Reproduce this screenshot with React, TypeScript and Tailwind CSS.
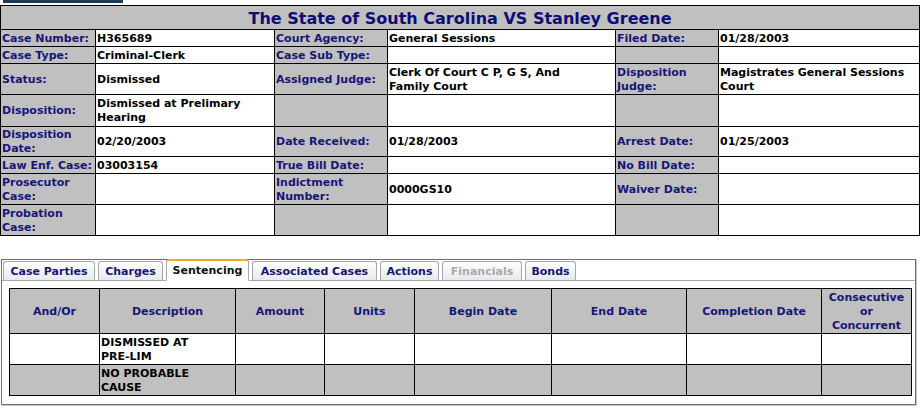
import React from 'react';

type Cell = { label?: React.ReactNode; value?: React.ReactNode };
type Row = { h: string; cells: Cell[] };

const rows: Row[] = [
  { h: 'h-[17px]', cells: [{ label: 'Case Number:', value: 'H365689' }, { label: 'Court Agency:', value: 'General Sessions' }, { label: 'Filed Date:', value: '01/28/2003' }] },
  { h: 'h-[17px]', cells: [{ label: 'Case Type:', value: 'Criminal-Clerk' }, { label: 'Case Sub Type:' }, {}] },
  { h: 'h-[31px]', cells: [{ label: 'Status:', value: 'Dismissed' }, { label: 'Assigned Judge:', value: <>Clerk Of Court C P, G S, And<br />Family Court</> }, { label: <>Disposition<br />Judge:</>, value: <>Magistrates General Sessions<br />Court</> }] },
  { h: 'h-[32px]', cells: [{ label: 'Disposition:', value: <>Dismissed at Prelimary<br />Hearing</> }, {}, {}] },
  { h: 'h-[30px]', cells: [{ label: <>Disposition<br />Date:</>, value: '02/20/2003' }, { label: 'Date Received:', value: '01/28/2003' }, { label: 'Arrest Date:', value: '01/25/2003' }] },
  { h: 'h-[17px]', cells: [{ label: 'Law Enf. Case:', value: '03003154' }, { label: 'True Bill Date:' }, { label: 'No Bill Date:' }] },
  { h: 'h-[31px]', cells: [{ label: <>Prosecutor<br />Case:</> }, { label: <>Indictment<br />Number:</>, value: '0000GS10' }, { label: 'Waiver Date:' }] },
  { h: 'h-[31px]', cells: [{ label: <>Probation<br />Case:</> }, {}, {}] },
];

const tabs = [
  { name: 'Case Parties', w: 'w-[92px]' },
  { name: 'Charges', w: 'w-[65px]' },
  { name: 'Sentencing', w: 'w-[83px]', active: true },
  { name: 'Associated Cases', w: 'w-[125px]' },
  { name: 'Actions', w: 'w-[59px]' },
  { name: 'Financials', w: 'w-[80px]', disabled: true },
  { name: 'Bonds', w: 'w-[51px]' },
];

const sentCols = [
  { name: 'And/Or', w: 'w-[90px]' },
  { name: 'Description', w: 'w-[136px]' },
  { name: 'Amount', w: 'w-[89px]' },
  { name: 'Units', w: 'w-[90px]' },
  { name: 'Begin Date', w: 'w-[137px]' },
  { name: 'End Date', w: 'w-[135px]' },
  { name: 'Completion Date', w: 'w-[135px]' },
  { name: <>Consecutive<br />or<br />Concurrent</>, w: 'w-[90px]' },
];

const sentRows = [
  { desc: <>DISMISSED AT<br />PRE-LIM</>, bg: 'bg-white' },
  { desc: <>NO PROBABLE<br />CAUSE</>, bg: 'bg-[#c0c0c0]' },
];

export default function App() {
  return (
    <div className="w-[924px] h-[413px] bg-white font-['DejaVu_Sans',Verdana,sans-serif] text-[11px] leading-[14px] font-bold overflow-hidden">
      <div className="ml-[3px] w-[120px] h-[3px] bg-[#1d3b56]" />

      {/* Case header */}
      <table className="mt-[2px] w-[919px] table-fixed border-collapse border border-black">
        <colgroup>
          <col className="w-[95px]" />
          <col className="w-[179px]" />
          <col className="w-[113px]" />
          <col className="w-[228px]" />
          <col className="w-[103px]" />
          <col className="w-[201px]" />
        </colgroup>
        <tbody>
          <tr className="h-[24px]">
            <td colSpan={6} className="bg-[#c0c0c0] border border-black text-center text-[16px] leading-[20px] text-[#0d0d75] pt-[2px]">
              The State of South Carolina VS Stanley Greene
            </td>
          </tr>
          {rows.map((row, i) => (
            <tr key={i} className={row.h}>
              {row.cells.map((c, j) => (
                <React.Fragment key={j}>
                  <td className="bg-[#c0c0c0] border border-black px-[1px] pt-[1px] align-middle whitespace-nowrap text-[#161678]">{c.label}</td>
                  <td className="bg-white border border-black px-[1px] pt-[1px] align-middle whitespace-nowrap text-black">{c.value}</td>
                </React.Fragment>
              ))}
            </tr>
          ))}
        </tbody>
      </table>

      {/* Tabs */}
      <div className="mt-[23px] ml-[1px] w-[915px] h-[146px] border border-[#6e6e6e] shadow-[1px_1px_0_#c8c8c8]">
        <div className="flex items-end gap-[3px] pl-[1px] h-[21px] border-b border-[#a8a8a8]">
          {tabs.map((t) =>
            t.active ? (
              <div key={t.name} className={`${t.w} h-[22px] -mb-[1px] pt-[1px] bg-white border border-[#a8a8a8] border-b-white border-t-2 border-t-[#f2a93b] rounded-t-[3px] flex items-center justify-center text-[#111]`}>
                {t.name}
              </div>
            ) : (
              <div key={t.name} className={`${t.w} h-[19px] pt-[1px] bg-gradient-to-b from-white to-[#e6e9ee] border border-[#a8a8a8] border-b-0 rounded-t-[3px] flex items-center justify-center ${t.disabled ? 'text-[#a9a9a9]' : 'text-[#161678]'}`}>
                {t.name}
              </div>
            )
          )}
        </div>

        <div className="pt-[7px] pl-[7px]">
          <table className="w-[903px] table-fixed border-collapse border border-black">
            <colgroup>
              {sentCols.map((c, i) => <col key={i} className={c.w} />)}
            </colgroup>
            <thead>
              <tr className="h-[45px]">
                {sentCols.map((c, i) => (
                  <th key={i} className="bg-[#c0c0c0] border border-black text-center align-middle pt-[2px] text-[#161678] font-bold">{c.name}</th>
                ))}
              </tr>
            </thead>
            <tbody>
              {sentRows.map((r, i) => (
                <tr key={i} className={`h-[31px] ${r.bg}`}>
                  <td className="border border-black" />
                  <td className="border border-black px-[1px] pt-[1px] align-middle text-black whitespace-nowrap">{r.desc}</td>
                  {[0, 1, 2, 3, 4, 5].map((k) => <td key={k} className="border border-black" />)}
                </tr>
              ))}
            </tbody>
          </table>
        </div>
      </div>
    </div>
  );
}
